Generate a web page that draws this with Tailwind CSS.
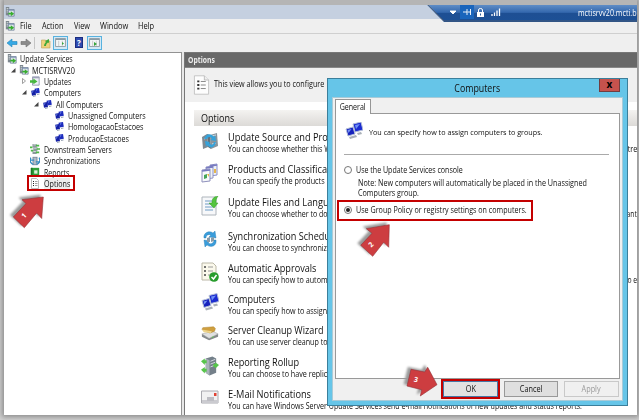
<!DOCTYPE html>
<html lang="en"><head><meta charset="utf-8"><title>Update Services</title>
<script src="https://cdn.jsdelivr.net/npm/@tailwindcss/browser@4"></script></head>
<body class="w-[639px] h-[420px] overflow-hidden bg-[#d0d0d0] font-['Open_Sans','Noto_Sans',sans-serif] text-[#111]">
<svg class="hidden">
<symbol id="srv" viewBox="0 0 12 12"><path d="M1 0h4v10H1z" fill="#7d878e"/><path d="M2 2h2M2 4h2M2 6h2" stroke="#e5eaee"/><path d="M4 3h7v8H4z" fill="#dfe5ec" stroke="#677994" stroke-width=".9"/><path d="M4 4h7" stroke="#7b90b1"/><path d="M4 7h3V5l4 3-4 3V9H4z" fill="#37ad2e"/></symbol>
<symbol id="pc" viewBox="0 0 18 18"><path d="M8 2l8-2 2 8-8 2z" fill="#1b2bd0" stroke="#b4bfd8" stroke-width="1"/><path d="M10 3l5-1-4 5z" fill="#6f8ff5"/><path d="M1 7l7-2 2 7-7 2z" fill="#1622bd" stroke="#b4bfd8" stroke-width="1"/><path d="M2.500 8l4-1-3 4z" fill="#7492f3"/><path d="M4 15l7-2 1 2-7 2zM12 11l4-1 1 2-4 1z" fill="#a9b0b8"/></symbol>
<symbol id="pcs" viewBox="0 0 9 9"><path d="M3.500.8L8 0l.8 4.800-4.300.7z" fill="#1c2bbd"/><path d="M.2 2.800l4-.8.800 5-4 .8z" fill="#1520a5"/><path d="M1 3.500l1.600-.3-1.200 1.900zM5 1.500L6.600 1.200 5.400 3z" fill="#7895f0"/><path d="M2 8.500l3-.8M6 6.500l2.500-.5" stroke="#98a2b2"/></symbol>
<symbol id="upd" viewBox="0 0 12 12"><path d="M3 1h8v10H3z" fill="#eef1f6" stroke="#8b8fa8"/><path d="M3 2h8" stroke="#9c9fb8" stroke-width="1.500"/><path d="M0 5h4V3l5 3.500L4 10V8H0z" fill="#45b63c"/></symbol>
<symbol id="dwn" viewBox="0 0 12 12"><path d="M3 0h5v4H3zM4 4h5v4H4zM3 8h5v4H3z" fill="#8d999d"/><path d="M0 4h3M1 8h3M7 2h4M8 6h4M7 10h4" stroke="#4eb848" stroke-width="2"/><path d="M4 1h3M5 5h3M4 9h3" stroke="#e3e8ea"/></symbol>
<symbol id="syn" viewBox="0 0 12 12"><path d="M3 1h6v10H3z" fill="#7c8c9a"/><path d="M5 2v8M7 2v8" stroke="#dde5ec"/><path d="M1 2c-2 4 0 7 3 8M11 2c2 4 0 7-3 8M0 5h5M7 7h5" fill="none" stroke="#348dc3" stroke-width="1.600"/></symbol>
<symbol id="rep" viewBox="0 0 12 12"><path d="M1 1h10v10H1z" fill="#2fa03a"/><path d="M1 1h2v10H1z" fill="#1c7827"/><path d="M5 4h4v4H5z" fill="#d8f2d5"/></symbol>
<symbol id="opt" viewBox="0 0 24 28"><path d="M2 1h14l6 6v20H2z" fill="#fdfdfd" stroke="#b3b3b3"/><path d="M16 1v6h6" fill="#eee" stroke="#aaa"/><path d="M6 9h3M6 14h3M6 19h3" stroke="#333" stroke-width="2.500"/><path d="M11 9h7M11 14h7M11 19h7" stroke="#888" stroke-width="1.400"/></symbol>
<symbol id="pane" viewBox="0 0 12 10"><path d="M.5.5h11v9H.5z" fill="#f4f6f7" stroke="#8d999f"/><path d="M1 1.500h10" stroke="#8b9ca5" stroke-width="1.500"/><path d="M4 3v6M8 3v6" stroke="#aaa" stroke-width=".6"/></symbol>
<symbol id="i1" viewBox="0 0 18 18"><path d="M1 5l5-3 1 13-5 2z" fill="#7e8992"/><path d="M9 3l7-2 1 13-7 3z" fill="#89949c"/><path d="M6 2l3 1 1 14-3-2z" fill="#66727b"/><path d="M11 4l4-1M11 12l4-1M3 7l2-1" stroke="#d9dfe3"/><path d="M3 7c2-6 7-6 10-2l1-2 1 6-6-1 2-1c-2-3-4-2-5 0z" fill="#35a2da"/><path d="M15 10c-1 6-6 7-9 3l-1 2-1-6 5 1-1 1c3 3 4 2 5-1z" fill="#35a2da"/></symbol>
<symbol id="i2" viewBox="0 0 18 20"><path d="M9 2l7-1v11l-7 1z" fill="#eef3f8" stroke="#8b8ec6"/><path d="M5 4l7-1v12l-7 1z" fill="#eef3f8" stroke="#9193c4"/><path d="M1 7l8-1v12l-8 1z" fill="#f7f9fb" stroke="#8f91bc"/><path d="M1 8l8-1M5 5l7-1M9 3l7-1" stroke="#787bc1" stroke-width="1.500"/><path d="M3 12l3-1v4l-3 1z" fill="#45a45a"/><path d="M6 11h2v3z" fill="#eab53a"/><path d="M13 6h2v4h-2z" fill="#e6b64c"/></symbol>
<symbol id="i3" viewBox="0 0 18 20"><path d="M1 1h14v18H1z" fill="#f7f8fa" stroke="#aeb5bc"/><path d="M4 5h7M4 8h8M4 11h8M4 14h8" stroke="#6f9cc5"/><path d="M17 0c-5 1-6 3-6 7H8l5 5 4-5h-2c0-3 0-4 2-7z" fill="#54c43f" stroke="#329927" stroke-width=".5"/></symbol>
<symbol id="i4" viewBox="0 0 16 19"><path d="M2 8C1 3 7 0 11 3l2-2 1 7-7-1 2-2C6 4 4 5 4 8z" fill="#3a9ddb" stroke="#2379ae" stroke-width=".4"/><path d="M14 10c1 6-5 8-9 5l-2 2-1-7 6 1-2 2c3 2 6 0 6-3z" fill="#3a9ddb" stroke="#2379ae" stroke-width=".4"/><path d="M5 8l3-1v5H5zM9 8l3-1v4l-3 1z" fill="#889aa7"/></symbol>
<symbol id="i5" viewBox="0 0 18 20"><path d="M1 1h11l3 3v14H1z" fill="#fbf9ec" stroke="#bbb8a7"/><path d="M3 5h2M3 9h2M3 13h2" stroke="#444" stroke-width="1.500"/><path d="M7 5h5M7 9h5M7 13h3" stroke="#999"/><circle cx="13" cy="15" r="4.800" fill="#279c2c"/><path d="M10.500 15l2 2 3-4" fill="none" stroke="#fff" stroke-width="1.500"/></symbol>
<symbol id="i7" viewBox="0 0 20 15"><path d="M1 8l12-3 6 3-10 5z" fill="#e0e1e1" stroke="#8b8e8f" stroke-width=".5"/><path d="M1 8l8 5v2l-8-4zM9 13l10-5v3L9 15z" fill="#85898b"/><path d="M1 3l1-2 12-1 2 2-1 3-5 2z" fill="#cf9f3f" stroke="#a87b22" stroke-width=".5"/><path d="M1 3l11 2-1 2-8-1z" fill="#ecd389"/><path d="M12 12l2-1" stroke="#58d046"/></symbol>
<symbol id="i8" viewBox="0 0 19 20"><path d="M5 2l7-2 4 2v15l-7 3-4-3z" fill="#74808a"/><path d="M5 2l4 2v16l-4-3z" fill="#a9b2b9"/><path d="M10 5l5-2M10 8l5-2M10 11l5-2" stroke="#d5dbe0"/><path d="M0 5l4-3v2h2v3H4v2zM0 14l4-3v2h2v3H4v2zM19 9l-4-3v2h-2v3h2v2z" fill="#56c54a"/></symbol>
<symbol id="i9" viewBox="0 0 18 14"><path d="M.5 1h16.500v12H.5z" fill="#f1f1f2" stroke="#aaaab0"/><path d="M1 10h16v3H1z" fill="#cbcbd0"/><path d="M6 7h7v4H6z" fill="#bdbdc3"/><path d="M13 3h2.500v3H13z" fill="#e14234"/></symbol>
</svg>

<main class="relative ml-1 w-[633px] h-[415px] pt-[5px] shadow-[0_0_5px_2px_#8c8c8c] bg-[#b5b5b5] flex flex-col">
 <header class="h-[14px] shrink-0 bg-[#c5d0e0] flex items-center justify-between">
  <svg class="w-[10px] h-[10px] ml-[1px]"><use href="#srv"/></svg>
  <div class="relative z-10 w-[210px] h-[17px] self-start text-white shrink-0">
   <svg class="absolute inset-0" width="210" height="17"><defs><linearGradient id="g" x2="0" y2="1"><stop stop-color="#5f8dc6"/><stop offset=".43" stop-color="#3468ae"/><stop offset=".5" stop-color="#1e4f93"/><stop offset="1" stop-color="#1c5096"/></linearGradient></defs><path d="M0 0h210v17H17z" fill="url(#g)"/><path d="M1 0l16 16h193" fill="none" stroke="#555e6c" stroke-width=".8"/><path d="M33 0h14v14H33z" fill="#1a65bc"/><path d="M23 6h6l-3 3zM36 7h4M40 4v6M40.500 7H44M43.500 4v6" fill="#fff" stroke="#fff" stroke-width=".9"/><path d="M50 7h7v5h-7z" fill="#fff"/><path d="M51.500 7V5q0-1.500 2-1.500t2 1.500v2" fill="none" stroke="#fff"/><path d="M53.500 8.500v2" stroke="#315f9b"/><path d="M65 9v2M67.500 7.500V11M70 5.500V11M72.500 3.500V11" stroke="#fff" stroke-width="1.300"/></svg>
   <span class="absolute left-[151px] top-[1px] text-[8.500px] leading-[13px] whitespace-nowrap origin-left scale-x-[.84]">mctisrvv20.mcti.b</span>
  </div>
 </header>
 <nav class="h-[14.500px] shrink-0 bg-[#efefef] border-b border-[#cfcfcf] flex items-center text-[8.500px] leading-[13px] whitespace-nowrap">
  <svg class="w-[10px] h-[10px] ml-[1px]"><use href="#srv"/></svg>
  <span class="w-[21.500px] ml-[5px] origin-left scale-x-[.86]">File</span><span class="w-[32px] origin-left scale-x-[.86]">Action</span><span class="w-[26px] origin-left scale-x-[.86]">View</span><span class="w-[38px] origin-left scale-x-[.88]">Window</span><span class="origin-left scale-x-[.88]">Help</span>
 </nav>
 <div class="h-[18.500px] shrink-0 bg-[#efefef] flex items-center">
  <svg class="ml-[2px]" width="29" height="12"><path d="M1 6l5-4v2.500h5v3H6V10z" fill="#36a9e5" stroke="#2484b7" stroke-width=".6"/><path d="M25 6l-5-4v2.500h-5v3h5V10z" fill="#8b8b8b" stroke="#6e6e6e" stroke-width=".6"/><path d="M28.500 0v12" stroke="#c5c5c5"/></svg>
  <svg class="ml-[6px]" width="10" height="12"><path d="M.5 3h4l1 1H9v7H.5z" fill="#efd17b" stroke="#bba058" stroke-width=".6"/><path d="M3 9c0-2 1-3 2-4L4 4l4-2v4L7 5.500C5 7 5 8 5 9z" fill="#41a839"/></svg>
  <div class="ml-[2px] w-[15px] h-[14px] border border-[#58b2df] bg-[#d3e9f6] flex items-center justify-center"><svg class="w-[11px] h-[9px]"><use href="#pane"/><path d="M7 4l2 1.500L7 7z" fill="#36a53c"/></svg></div>
  <div class="ml-[7px] w-[8px] h-[11px] bg-[#2f4aaf] border border-[#1b2d80] text-white text-[8px] leading-[9px] text-center font-bold">?</div>
  <div class="ml-[4px] w-[15px] h-[14px] border border-[#58b2df] bg-[#d3e9f6] flex items-center justify-center"><svg class="w-[11px] h-[9px]"><use href="#pane"/><path d="M5 4l3 2-3 2z" fill="#36a53c"/></svg></div>
 </div>

 <div class="flex h-[363px] shrink-0">
  <aside class="w-[178px] shrink-0 bg-white border-t border-r border-[#929292] text-[8.500px] leading-[11px] whitespace-nowrap">
   <div class="h-[11.350px] flex items-center pl-[3px] gap-[3px]"><svg class="w-[10px] h-[10px]"><use href="#srv"/></svg><span class="origin-left scale-x-[.83]">Update Services</span></div>
   <div class="h-[11.350px] flex items-center pl-[7px] gap-[3px]"><svg width="5" height="5"><path d="M4.500 0v4.500H0z" fill="#444"/></svg><svg class="w-[10px] h-[10px]"><use href="#srv"/></svg><span class="origin-left scale-x-[.86]">MCTISRVV20</span></div>
   <div class="h-[11.350px] flex items-center pl-[18px] gap-[4px]"><svg width="4" height="6"><path d="M.5.5l3 2.500-3 2.500z" fill="#fff" stroke="#777" stroke-width=".7"/></svg><svg class="w-[10px] h-[10px]"><use href="#upd"/></svg><span class="origin-left scale-x-[.82]">Updates</span></div>
   <div class="h-[11.350px] flex items-center pl-[18px] gap-[4px]"><svg width="5" height="5"><path d="M4.500 0v4.500H0z" fill="#444"/></svg><svg class="w-[9px] h-[9px]"><use href="#pcs"/></svg><span class="origin-left scale-x-[.84]">Computers</span></div>
   <div class="h-[11.350px] flex items-center pl-[30px] gap-[4px]"><svg width="5" height="5"><path d="M4.500 0v4.500H0z" fill="#444"/></svg><svg class="w-[9px] h-[9px]"><use href="#pcs"/></svg><span class="origin-left scale-x-[.84]">All Computers</span></div>
   <div class="h-[11.350px] flex items-center pl-[51px] gap-[4px]"><svg class="w-[9px] h-[9px]"><use href="#pcs"/></svg><span class="origin-left scale-x-[.84]">Unassigned Computers</span></div>
   <div class="h-[11.350px] flex items-center pl-[51px] gap-[4px]"><svg class="w-[9px] h-[9px]"><use href="#pcs"/></svg><span class="origin-left scale-x-[.845]">HomologacaoEstacoes</span></div>
   <div class="h-[11.350px] flex items-center pl-[51px] gap-[4px]"><svg class="w-[9px] h-[9px]"><use href="#pcs"/></svg><span class="origin-left scale-x-[.84]">ProducaoEstacoes</span></div>
   <div class="h-[11.350px] flex items-center pl-[26px] gap-[4px]"><svg class="w-[10px] h-[10px]"><use href="#dwn"/></svg><span class="origin-left scale-x-[.82]">Downstream Servers</span></div>
   <div class="h-[11.350px] flex items-center pl-[26px] gap-[4px]"><svg class="w-[10px] h-[10px]"><use href="#syn"/></svg><span class="origin-left scale-x-[.83]">Synchronizations</span></div>
   <div class="h-[11.350px] flex items-center pl-[26px] gap-[4px]"><svg class="w-[10px] h-[10px]"><use href="#rep"/></svg><span class="origin-left scale-x-[.82]">Reports</span></div>
   <div class="h-[11.350px] flex items-center pl-[26px] gap-[4px]"><svg width="10" height="11"><path d="M1.500.5h5l2 2v8h-7z" fill="#fff" stroke="#aaa" stroke-width=".8"/><path d="M3 3.500h1M3 5.500h1M3 7.500h1" stroke="#222"/><path d="M5 3.500h2.500M5 5.500h2.500M5 7.500h2.500" stroke="#888" stroke-width=".8"/></svg><span class="origin-left scale-x-[.84] bg-[#ededed]">Options</span></div>
  </aside>
  <div class="w-[2px] shrink-0 bg-[#e8e8e8]"></div>
  <section class="w-[453px] shrink-0 bg-white border-l border-t border-[#777] overflow-hidden">
   <h1 class="h-[13.500px] bg-[#686868] text-[#eee] text-[8.500px] leading-[13px] font-bold pl-[3px]"><span class="inline-block origin-left scale-x-[.8]">Options</span></h1>
   <div class="h-[35px] bg-[#f0f0f0] border-t border-[#888] flex items-center pl-[8px] gap-[4px] whitespace-nowrap text-[8.500px]"><svg class="w-[17px] h-[20px]"><use href="#opt"/></svg><span class="origin-left scale-x-[.85]">This view allows you to configure</span></div>
   <div class="mt-[8px] ml-[9px]">
    <h2 class="h-[16px] bg-linear-to-b from-[#f4f3f1] to-[#dcdad7] pl-[7px] text-[10.500px] leading-[16.500px]"><span class="inline-block origin-left scale-x-[.86]">Options</span></h2>
    <ul class="pl-[7px] pt-[5px] whitespace-nowrap">
     <li class="h-[32px] flex gap-[9px]"><svg class="w-[18px] h-[18px] mt-[1px] shrink-0"><use href="#i1"/></svg><div class="grow"><h3 class="text-[10.500px] leading-[13px] origin-left scale-x-[.88]">Update Source and Prox</h3><p class="flex justify-between text-[8.500px] leading-[9px]"><span class="origin-left scale-x-[.83]">You can choose whether this W</span><span class="origin-right scale-x-[.85]">tre</span></p></div></li>
     <li class="h-[33.500px] flex gap-[9px]"><svg class="w-[18px] h-[20px] shrink-0"><use href="#i2"/></svg><div class="grow"><h3 class="text-[10.500px] leading-[13px] origin-left scale-x-[.88]">Products and Classificat</h3><p class="text-[8.500px] leading-[9px] origin-left scale-x-[.85]">You can specify the products</p></div></li>
     <li class="h-[33.500px] flex gap-[9px]"><svg class="w-[18px] h-[20px] shrink-0"><use href="#i3"/></svg><div class="grow"><h3 class="text-[10.500px] leading-[13px] origin-left scale-x-[.88]">Update Files and Langu</h3><p class="flex justify-between text-[8.500px] leading-[9px]"><span class="origin-left scale-x-[.83]">You can choose whether to do</span><span class="origin-right scale-x-[.8]">ant</span></p></div></li>
     <li class="h-[32px] flex gap-[9px]"><svg class="w-[18px] h-[19px] shrink-0"><use href="#i4"/></svg><div class="grow"><h3 class="text-[10.500px] leading-[13px] origin-left scale-x-[.87]">Synchronization Schedu</h3><p class="text-[8.500px] leading-[9px] origin-left scale-x-[.845]">You can choose to synchroniz</p></div></li>
     <li class="h-[31px] flex gap-[9px]"><svg class="w-[18px] h-[20px] shrink-0"><use href="#i5"/></svg><div class="grow"><h3 class="text-[10.500px] leading-[13px] origin-left scale-x-[.87]">Automatic Approvals</h3><p class="flex justify-between text-[8.500px] leading-[9px]"><span class="origin-left scale-x-[.84]">You can specify how to autom</span><span class="origin-right scale-x-[.8]">o e</span></p></div></li>
     <li class="h-[31.500px] flex gap-[9px]"><svg class="w-[18px] h-[19px] shrink-0"><use href="#pc"/></svg><div class="grow"><h3 class="text-[10.500px] leading-[13px] origin-left scale-x-[.86]">Computers</h3><p class="text-[8.500px] leading-[9px] origin-left scale-x-[.845]">You can specify how to assign</p></div></li>
     <li class="h-[31.500px] flex gap-[9px]"><svg class="w-[18px] h-[15px] mt-[2px] shrink-0"><use href="#i7"/></svg><div class="grow"><h3 class="text-[10.500px] leading-[13px] origin-left scale-x-[.86]">Server Cleanup Wizard</h3><p class="text-[8.500px] leading-[9px] origin-left scale-x-[.84]">You can use server cleanup to</p></div></li>
     <li class="h-[32px] flex gap-[9px]"><svg class="w-[18px] h-[20px] shrink-0"><use href="#i8"/></svg><div class="grow"><h3 class="text-[10.500px] leading-[13px] origin-left scale-x-[.87]">Reporting Rollup</h3><p class="text-[8.500px] leading-[9px] origin-left scale-x-[.845]">You can choose to have replic</p></div></li>
     <li class="h-[28px] flex gap-[9px]"><svg class="w-[18px] h-[14px] mt-[2px] shrink-0"><use href="#i9"/></svg><div class="w-[409px]"><h3 class="text-[10.500px] leading-[13px] origin-left scale-x-[.88]">E-Mail Notifications</h3><p class="text-[8.500px] leading-[9px] origin-left scale-x-[.835]">You can have Windows Server Update Services send e-mail notifications of new updates and status reports.</p></div></li>
    </ul>
   </div>
  </section>
 </div>
</main>

<div class="absolute left-[327px] top-[78px] w-[301px] h-[328px] bg-[#66c5e8] border border-[#3b7f9b] flex flex-col px-[4px] pb-[4px]">
 <div class="relative h-[18px] shrink-0 text-center text-[10.500px] leading-[18px]"><span class="inline-block scale-x-[.84]">Computers</span><div class="absolute right-[3px] top-0 w-[21px] h-[13px] bg-[#c6524d] border border-t-0 border-[#713d40] text-[10px] leading-[11px] font-bold text-black">x</div></div>
 <div class="grow bg-[#f0f0f0] border border-[#a9cbd8] px-[2px] pt-[1px]">
  <div class="relative z-10 w-[36px] h-[15px] bg-white border border-b-0 border-[#969696] flex justify-center text-[8.500px] leading-[13px]"><span class="scale-x-[.83]">General</span></div>
  <div class="-mt-[1px] h-[266px] bg-white border border-[#999] pl-[8px] text-[8.500px] whitespace-nowrap">
   <div class="w-[265px] h-[41px] border-b border-[#aaa] flex items-start pt-[8px] gap-[6px]"><svg class="w-[18px] h-[18px] ml-[1px] shrink-0"><use href="#pc"/></svg><span class="text-[8px] leading-[20px] origin-left scale-x-[.9]">You can specify how to assign computers to groups.</span></div>
   <label class="h-[10px] mt-[10px] flex items-center gap-[4px]"><span class="w-[8px] h-[8px] rounded-full border border-[#777]"></span><span class="origin-left scale-x-[.83]">Use the Update Services console</span></label>
   <p class="pl-[14px] mt-[3px] leading-[9.500px]"><span class="inline-block origin-left scale-x-[.845]">Note: New computers will automatically be placed in the Unassigned<br>Computers group.</span></p>
   <label class="h-[10px] mt-[8px] flex items-center gap-[4px]"><span class="w-[8px] h-[8px] rounded-full border border-[#777] flex items-center justify-center"><i class="w-[4px] h-[4px] rounded-full bg-[#222]"></i></span><span class="origin-left scale-x-[.84]">Use Group Policy or registry settings on computers.</span></label>
  </div>
  <div class="flex justify-end pt-[2px] pr-px gap-[6px] text-[8.500px] leading-[14px] text-center"><button class="w-[55px] h-[16px] bg-[#e2e2e2] border border-[#4777a6]"><span class="inline-block scale-x-[.86]">OK</span></button><button class="w-[54px] h-[16px] bg-[#dfdfdf] border border-[#999]"><span class="inline-block scale-x-[.86]">Cancel</span></button><button class="w-[55px] h-[16px] border border-[#c9c9c9] text-[#999]"><span class="inline-block scale-x-[.86]">Apply</span></button></div>
 </div>
</div>

<div class="absolute left-[27px] top-[175px] w-[48px] h-[16px] border-2 border-[#c40000]"></div>
<div class="absolute left-[337px] top-[200px] w-[196px] h-[21px] border-2 border-[#c40000]"></div>
<div class="absolute left-[441px] top-[379px] w-[59px] h-[20px] border-2 border-[#c40000]"></div>
<svg class="absolute left-0 top-0 drop-shadow-[-3px_-2px_1px_#999]" width="639" height="420" fill="#cd3d40" stroke="#963035" stroke-width=".6"><path d="M43.300 197L22 199.700l4 3.800L13.300 217l11 10.700L36.700 213l5 5.500zM389.300 224.700l-23 4 5.700 4.600-11.300 12 12 11L383.700 242.300l5 5zM411 369.300l13.700 2.700 3-4.700 9.300 17.400L420.300 396l1.400-6.300L407 386z"/></svg>
<div class="absolute left-[22px] top-[211px] text-white text-[7px] leading-[9px] font-bold -rotate-45">1</div>
<div class="absolute left-[369px] top-[240px] text-white text-[7px] leading-[9px] font-bold -rotate-45">2</div>
<div class="absolute left-[414px] top-[375px] text-white text-[7px] leading-[9px] font-bold rotate-12">3</div>
</body></html>
